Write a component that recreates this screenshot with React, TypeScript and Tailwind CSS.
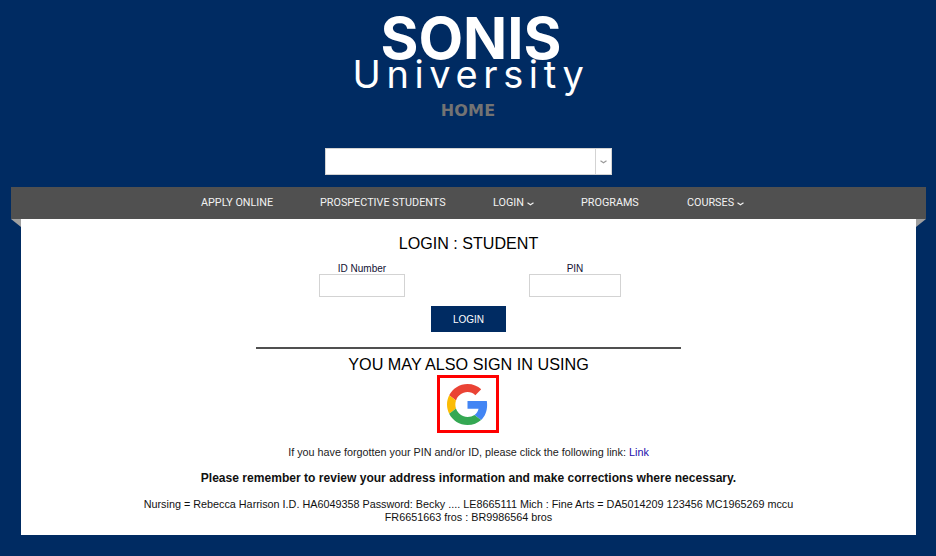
import React from "react";

const sans = "font-['Liberation_Sans',Arial,sans-serif]";

function Chevron({ className }: { className?: string }) {
	return (
		<svg width="7" height="4" viewBox="0 0 7 4" fill="none" className={className}>
			<path d="M0.5 0.8 L3.5 2.8 L6.5 0.8" stroke="currentColor" strokeWidth="1.2" />
		</svg>
	);
}

function GoogleLogo() {
	return (
		<svg width="41" height="41" viewBox="0 0 48 48">
			<path fill="#EA4335" d="M24 9.5c3.54 0 6.71 1.22 9.21 3.6l6.85-6.85C35.9 2.38 30.47 0 24 0 14.62 0 6.51 5.38 2.56 13.22l7.98 6.19C12.43 13.72 17.74 9.5 24 9.5z" />
			<path fill="#4285F4" d="M46.98 24.55c0-1.57-.15-3.09-.38-4.55H24v9.02h12.94c-.58 2.96-2.26 5.48-4.78 7.18l7.73 6c4.51-4.18 7.09-10.36 7.09-17.65z" />
			<path fill="#FBBC05" d="M10.53 28.59c-.48-1.45-.76-2.99-.76-4.59s.27-3.14.76-4.59l-7.98-6.19C.92 16.46 0 20.12 0 24c0 3.88.92 7.54 2.56 10.78l7.97-6.19z" />
			<path fill="#34A853" d="M24 48c6.48 0 11.93-2.13 15.89-5.81l-7.73-6c-2.15 1.45-4.92 2.3-8.16 2.3-6.26 0-11.57-4.22-13.47-9.91l-7.98 6.19C6.51 42.62 14.62 48 24 48z" />
		</svg>
	);
}

function NavItem({ label, caret, className }: { label: string; caret?: boolean; className: string }) {
	return (
		<a className={`flex items-center gap-[3px] whitespace-nowrap ${className}`}>
			{label}
			{caret && <Chevron className="mt-px" />}
		</a>
	);
}

export default function App() {
	return (
		<div className={`h-[556px] w-[936px] overflow-hidden bg-[#002b62] ${sans}`}>
			{/* Logo */}
			<header className="flex h-[148px] flex-col items-center">
				<div className="mt-[16px] ml-[6px] font-['Inter',sans-serif] text-[58px] leading-[44px] font-bold text-white">
					SONIS
				</div>
				<div className="ml-[6px] font-['Inter',sans-serif] text-[38px] leading-[28px] tracking-[5.6px] text-white">
					University
				</div>
				<div className="mt-[13px] font-['DejaVu_Sans',sans-serif] text-[16px] leading-[20px] font-bold tracking-[0.2px] text-[#737373]">
					HOME
				</div>
			</header>

			{/* Select */}
			<div className="flex justify-center">
				<div className="flex h-[27px] w-[287px] border border-[#d3d3d3] bg-white">
					<div className="flex-1" />
					<div className="flex w-[16px] items-center justify-center border-l border-[#d3d3d3] text-[#999999]">
						<Chevron />
					</div>
				</div>
			</div>

			{/* Nav */}
			<div className="relative ml-[11px] mt-[12px] flex h-[32px] w-[915px] items-center bg-[#505050] pl-[190px] font-['Roboto',sans-serif] text-[10.8px] text-[#f2f2f2]">
				<NavItem label="APPLY ONLINE" className="w-[119px]" />
				<NavItem label="PROSPECTIVE STUDENTS" className="w-[173px]" />
				<NavItem label="LOGIN" caret className="w-[88px]" />
				<NavItem label="PROGRAMS" className="w-[106px]" />
				<NavItem label="COURSES" caret className="w-[80px]" />
				<span className="absolute top-full left-0 h-0 w-0 border-t-[8px] border-l-[10px] border-t-[#a0a0a0] border-l-transparent" />
				<span className="absolute top-full right-0 h-0 w-0 border-t-[8px] border-r-[10px] border-t-[#a0a0a0] border-r-transparent" />
			</div>

			{/* Panel */}
			<main className="ml-[21px] flex h-[316px] w-[895px] flex-col items-center bg-white text-center text-black">
				<h1 className="mt-[15px] text-[16.1px] leading-[18px]">LOGIN : STUDENT</h1>
				<div className="mt-[11px] ml-[3px] flex items-start">
					<label className="flex w-[86px] flex-col items-center text-[10px] leading-[11px] text-[#111133]">
						ID Number
						<input className="h-[23px] w-[86px] border border-[#d3d3d3] bg-white" />
					</label>
					<div className="w-[124px]" />
					<label className="flex w-[92px] flex-col items-center text-[10px] leading-[11px] text-[#111133]">
						PIN
						<input className="h-[23px] w-[92px] border border-[#d3d3d3] bg-white" />
					</label>
				</div>
				<button className="mt-[9px] h-[26px] w-[75px] bg-[#002b62] text-[10px] text-white">LOGIN</button>
				<hr className="mt-[15px] h-[2px] w-[425px] border-0 bg-[#505050]" />
				<h2 className="mt-[6px] text-[16.2px] leading-[18px]">YOU MAY ALSO SIGN IN USING</h2>
				<div className="mt-[2px] mr-[2px] flex h-[58px] w-[62px] items-center justify-center border-[3px] border-[#ff0000]">
					<GoogleLogo />
				</div>
				<p className="mt-[13px] text-[10.8px] leading-[12px] text-[#222222]">
					If you have forgotten your PIN and/or ID, please click the following link:{" "}
					<a className="text-[#1a0dab]">Link</a>
				</p>
				<p className="mt-[13px] text-[12.07px] leading-[14px] font-bold text-[#111111]">
					Please remember to review your address information and make corrections where necessary.
				</p>
				<p className="mt-[13px] w-[680px] text-[10.8px] leading-[13px] text-[#111111]">
					Nursing = Rebecca Harrison I.D. HA6049358 Password: Becky .... LE8665111 Mich : Fine Arts = DA5014209 123456 MC1965269 mccu FR6651663 fros : BR9986564 bros
				</p>
			</main>
		</div>
	);
}
